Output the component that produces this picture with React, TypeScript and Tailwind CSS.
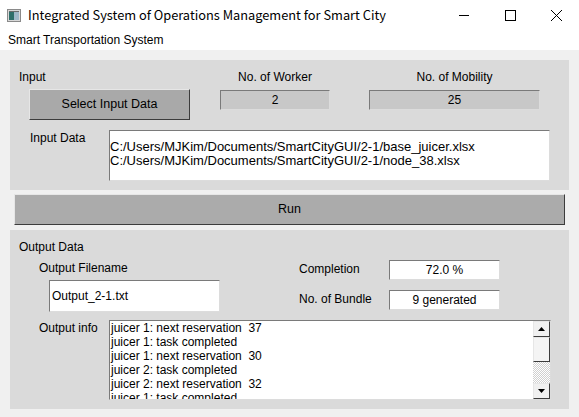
import React from 'react'

const logLines = [
  'juicer 1: next reservation  37',
  'juicer 1: task completed',
  'juicer 1: next reservation  30',
  'juicer 2: task completed',
  'juicer 2: next reservation  32',
  'juicer 1: task completed',
]

const raised = 'border border-t-[#e6e6e6] border-l-[#e6e6e6] border-b-[#3c3c3c] border-r-[#3c3c3c]'
const sunken = 'border border-t-[#7a7a7a] border-l-[#7a7a7a] border-b-[#dcdcdc] border-r-[#dcdcdc]'

function AppIcon() {
  return (
    <svg width="14" height="13" viewBox="0 0 14 13">
      <rect x="0.5" y="0.5" width="13" height="12" fill="#d8d8d8" stroke="#8a8a8a" />
      <rect x="2" y="3" width="5" height="8" fill="#2f6f6a" />
      <rect x="7" y="3" width="5" height="8" fill="#9fb8c8" />
      <rect x="2" y="2" width="10" height="1" fill="#6b6b6b" />
    </svg>
  )
}

function WindowControls() {
  return (
    <div className="flex items-center h-full">
      <div className="w-[46px] h-full flex items-center justify-center">
        <svg width="12" height="12" viewBox="0 0 12 12">
          <line x1="1" y1="6.5" x2="11" y2="6.5" stroke="#000" strokeWidth="1" />
        </svg>
      </div>
      <div className="w-[46px] h-full flex items-center justify-center">
        <svg width="12" height="12" viewBox="0 0 12 12">
          <rect x="1.5" y="1.5" width="10" height="10" fill="none" stroke="#000" strokeWidth="1" />
        </svg>
      </div>
      <div className="w-[46px] h-full flex items-center justify-center">
        <svg width="13" height="13" viewBox="0 0 13 13">
          <path d="M1 1 L12 12 M12 1 L1 12" stroke="#000" strokeWidth="1" />
        </svg>
      </div>
    </div>
  )
}

function Scrollbar() {
  return (
    <div className="w-[17px] h-full flex flex-col bg-[repeating-conic-gradient(#d0d0d0_0%_25%,#ffffff_0%_50%)] bg-[length:2px_2px]">
      <div className={`h-[16px] bg-[#f0f0f0] ${raised} flex items-center justify-center`}>
        <svg width="7" height="4" viewBox="0 0 7 4">
          <path d="M3.5 0 L7 4 L0 4 Z" fill="#000" />
        </svg>
      </div>
      <div className={`h-[25px] bg-[#f4f4f4] ${raised}`} />
      <div className="flex-1" />
      <div className={`h-[16px] bg-[#f0f0f0] ${raised} flex items-center justify-center`}>
        <svg width="7" height="4" viewBox="0 0 7 4">
          <path d="M0 0 L7 0 L3.5 4 Z" fill="#000" />
        </svg>
      </div>
    </div>
  )
}

export default function App() {
  return (
    <div className="w-[579px] h-[417px] bg-[#f0f0f0] flex flex-col overflow-hidden text-black font-['Liberation_Sans',Arial,sans-serif] text-[12px]">
      {/* Title bar */}
      <div className="h-[30px] bg-white flex items-center justify-between">
        <div className="flex items-center pl-[7px] gap-[7px]">
          <AppIcon />
          <span className="text-[12.8px] font-['Noto_Sans_CJK_KR','Noto_Sans',sans-serif] leading-none">
            Integrated System of Operations Management for Smart City
          </span>
        </div>
        <WindowControls />
      </div>

      {/* Menu bar */}
      <div className="h-[20px] bg-white flex items-center pl-[8px] text-[12px]">
        Smart Transportation System
      </div>

      <div className="px-[10px] pt-[10px] flex flex-col">
        {/* Input panel */}
        <div className="h-[130px] bg-[#dadada] flex flex-col pt-[9px]">
          <div className="flex">
            <div className="w-[210px] pl-[9px] flex flex-col">
              <div className="h-[16px] leading-[16px]">Input</div>
              <button className={`mt-[4px] ml-[10px] w-[161px] h-[31px] bg-[#a9a9a9] ${raised} text-[12.5px]`}>
                Select Input Data
              </button>
            </div>
            <div className="w-[110px] flex flex-col items-center">
              <div className="h-[16px] leading-[16px]">No. of Worker</div>
              <div className={`mt-[5px] w-full h-[20px] bg-[#c8c8c8] ${sunken} flex items-center justify-center`}>2</div>
            </div>
            <div className="w-[171px] ml-[39px] flex flex-col items-center">
              <div className="h-[16px] leading-[16px]">No. of Mobility</div>
              <div className={`mt-[5px] w-full h-[20px] bg-[#c8c8c8] ${sunken} flex items-center justify-center`}>25</div>
            </div>
          </div>
          <div className="flex mt-[10px]">
            <div className="w-[99px] pl-[20px] leading-[16px]">Input Data</div>
            <div className={`w-[441px] h-[51px] bg-white ${sunken} pt-[9px] text-[13px] leading-[14px]`}>
              <div>C:/Users/MJKim/Documents/SmartCityGUI/2-1/base_juicer.xlsx</div>
              <div>C:/Users/MJKim/Documents/SmartCityGUI/2-1/node_38.xlsx</div>
            </div>
          </div>
        </div>

        {/* Run */}
        <button className={`mt-[4px] mx-[4px] h-[31px] bg-[#ababab] ${raised} text-[12.5px]`}>Run</button>

        {/* Output panel */}
        <div className="mt-[5px] h-[179px] bg-[#dadada] flex flex-col pt-[9px]">
          <div className="pl-[9px] h-[16px] leading-[16px]">Output Data</div>
          <div className="flex mt-[5px]">
            <div className="w-[260px] pl-[29px] flex flex-col">
              <div className="h-[16px] leading-[16px]">Output Filename</div>
              <div className={`mt-[4px] ml-[10px] w-[171px] h-[32px] bg-white ${sunken} flex items-center pl-[2px]`}>
                Output_2-1.txt
              </div>
            </div>
            <div className="ml-[29px] flex flex-col gap-[10px]">
              <div className="flex items-center h-[20px]">
                <div className="w-[90px] pb-[3px]">Completion</div>
                <div className={`w-[111px] h-[20px] bg-white ${sunken} flex items-center justify-center`}>72.0 %</div>
              </div>
              <div className="flex items-center h-[20px]">
                <div className="w-[90px] pb-[3px]">No. of Bundle</div>
                <div className={`w-[111px] h-[20px] bg-white ${sunken} flex items-center justify-center`}>9 generated</div>
              </div>
            </div>
          </div>
          <div className="flex mt-[8px]">
            <div className="w-[99px] pl-[29px] leading-[16px]">Output info</div>
            <div className={`w-[442px] h-[80px] bg-white ${sunken} flex`}>
              <div className="flex-1 overflow-hidden pl-[1px] leading-[14px] whitespace-pre">
                {logLines.map((l, i) => (
                  <div key={i}>{l}</div>
                ))}
              </div>
              <Scrollbar />
            </div>
          </div>
        </div>
      </div>
    </div>
  )
}
